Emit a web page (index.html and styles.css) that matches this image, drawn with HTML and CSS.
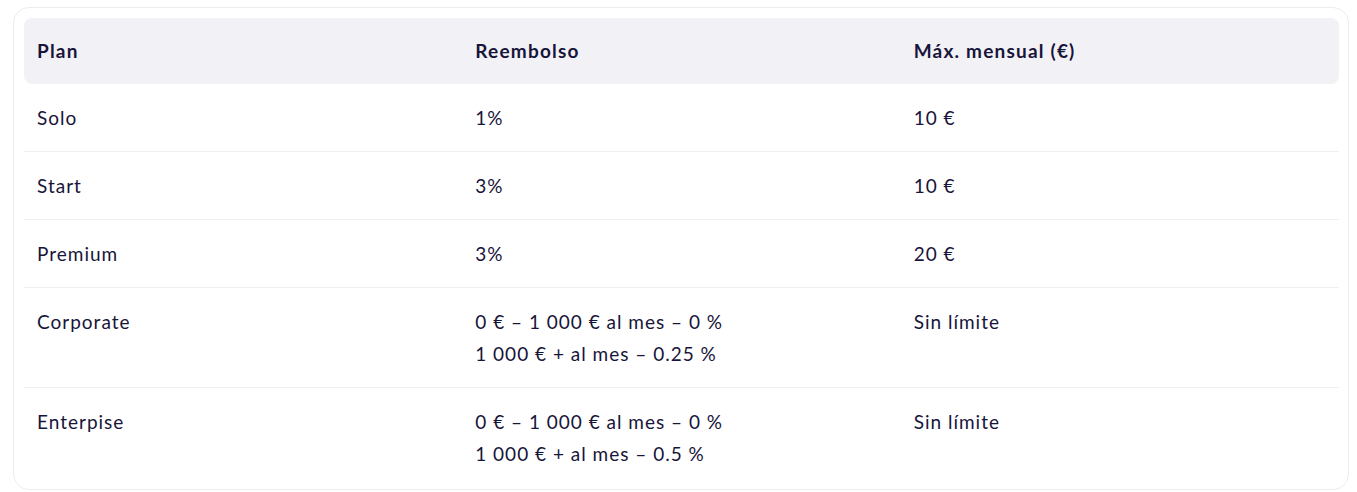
FILE: index.html
```html
<!DOCTYPE html>
<html lang="es">
<head>
<meta charset="utf-8">
<title>Reembolso</title>
<link rel="stylesheet" href="styles.css">
</head>
<body>
<div class="card">
  <table class="plans">
    <thead>
      <tr>
        <th>Plan</th>
        <th>Reembolso</th>
        <th>Máx. mensual (€)</th>
      </tr>
    </thead>
    <tbody>
      <tr><td>Solo</td><td>1%</td><td>10 €</td></tr>
      <tr><td>Start</td><td>3%</td><td>10 €</td></tr>
      <tr><td>Premium</td><td>3%</td><td>20 €</td></tr>
      <tr><td>Corporate</td><td>0 € – 1&#8239;000 € al mes – 0 %<br>1&#8239;000 € + al mes – 0.25 %</td><td>Sin límite</td></tr>
      <tr><td>Enterpise</td><td>0 € – 1&#8239;000 € al mes – 0 %<br>1&#8239;000 € + al mes – 0.5 %</td><td>Sin límite</td></tr>
    </tbody>
  </table>
</div>
</body>
</html>
```
FILE: styles.css
```css
html, body {
  margin: 0;
  padding: 0;
  background: #ffffff;
}
body {
  padding: 7px 8px 0 13px;
  font-family: Lato, "Open Sans", sans-serif;
  color: #17153a;
}
.card {
  border: 1px solid #ededf0;
  border-radius: 16px;
  padding: 10px 9px 2px 10px;
}
.plans {
  width: 100%;
  border-collapse: separate;
  border-spacing: 0;
  table-layout: fixed;
  font-size: 19px;
  line-height: 32px;
  letter-spacing: 1px;
}
.plans th {
  background: #f2f1f6;
  text-align: left;
  font-weight: 700;
  letter-spacing: 1.2px;
  padding: 17px 13px;
}
.plans th:first-child { border-radius: 8px 0 0 8px; }
.plans th:last-child { border-radius: 0 8px 8px 0; }
.plans td {
  vertical-align: top;
  padding: 18px 13px 17px;
  border-bottom: 1px solid #efeff1;
  font-weight: 400;
}
.plans tbody tr:last-child td {
  border-bottom: none;
}
```
